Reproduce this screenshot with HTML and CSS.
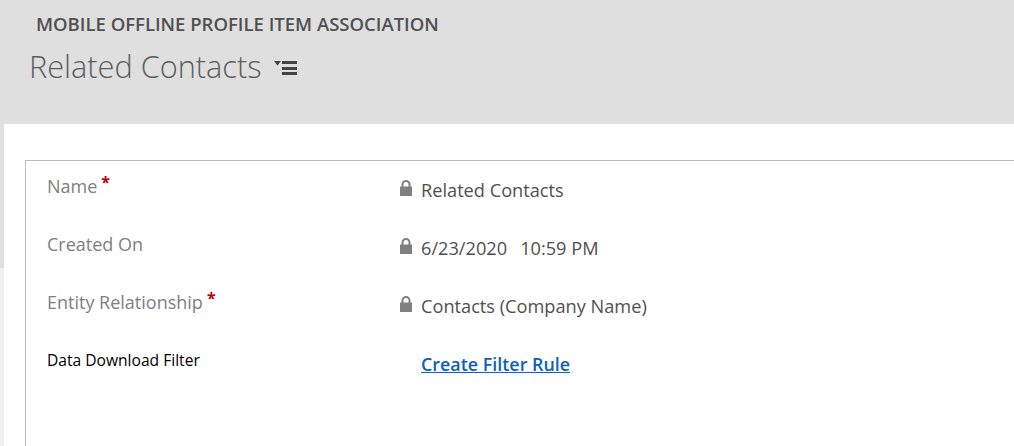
FILE: index.html

```html
<!DOCTYPE html>
<html lang="en">
<head>
    <meta charset="UTF-8">
    <meta name="viewport" content="width=device-width, initial-scale=1.0">
    <title>Related Contacts</title>
    <link rel="stylesheet" href="styles.css">
</head>
<body>
    <header class="page-header">
        <div class="entity-name">MOBILE OFFLINE PROFILE ITEM ASSOCIATION</div>
        <div class="record-title">
            <h1>Related Contacts</h1>
            <svg class="menu-icon" width="23" height="14" viewBox="0 0 23 14">
                <path d="M0 0h7L3.500 4.500z" fill="#444"/>
                <rect x="8" y="0" width="15" height="3" fill="#444"/>
                <rect x="8" y="6" width="15" height="3" fill="#444"/>
                <rect x="8" y="11" width="15" height="3" fill="#444"/>
            </svg>
        </div>
    </header>

    <div class="content">
        <div class="strip"></div>
        <main class="panel">
            <section class="card">
                <div class="row">
                    <div class="label">Name<span class="req">*</span></div>
                    <div class="value">
                        <svg class="lock" width="12" height="16" viewBox="0 0 12 16"><path d="M1.500 7V4.500a4.500 4.500 0 0 1 9 0V7H8.500V4.500a2.500 2.500 0 0 0-5 0V7zM0 6.500h12V16H0z" fill="#808084"/></svg>
                        <span>Related Contacts</span>
                    </div>
                </div>
                <div class="row">
                    <div class="label">Created On</div>
                    <div class="value">
                        <svg class="lock" width="12" height="16" viewBox="0 0 12 16"><path d="M1.500 7V4.500a4.500 4.500 0 0 1 9 0V7H8.500V4.500a2.500 2.500 0 0 0-5 0V7zM0 6.500h12V16H0z" fill="#808084"/></svg>
                        <span>6/23/2020</span><span class="time">10:59 PM</span>
                    </div>
                </div>
                <div class="row">
                    <div class="label">Entity Relationship<span class="req">*</span></div>
                    <div class="value">
                        <svg class="lock" width="12" height="16" viewBox="0 0 12 16"><path d="M1.500 7V4.500a4.500 4.500 0 0 1 9 0V7H8.500V4.500a2.500 2.500 0 0 0-5 0V7zM0 6.500h12V16H0z" fill="#808084"/></svg>
                        <span>Contacts (Company Name)</span>
                    </div>
                </div>
                <div class="row">
                    <div class="label label-dark">Data Download Filter</div>
                    <div class="value value-link">
                        <a href="#">Create Filter Rule</a>
                    </div>
                </div>
            </section>
        </main>
    </div>
</body>
</html>
```

FILE: styles.css

```css
html, body {
    height: 100%;
}
body {
    font-family: "Open Sans", "Noto Sans", sans-serif;
    margin: 0;
    overflow: hidden;
    background-color: #fff;
    display: flex;
    flex-direction: column;
}
.page-header {
    height: 124px;
    box-sizing: border-box;
    flex-shrink: 0;
    background-color: #dfdfdf;
    padding-top: 12px;
}
.entity-name {
    margin-left: 36px;
    font-size: 18.500px;
    font-weight: 600;
    line-height: 24px;
    color: #505050;
}
.record-title {
    display: flex;
    align-items: center;
    margin-left: 29px;
    margin-top: 5px;
}
.record-title h1 {
    margin: 0;
    font-size: 30.700px;
    font-weight: 300;
    line-height: 50px;
    color: #5c5c5c;
}
.menu-icon {
    margin-left: 13px;
    margin-top: 3px;
}
.content {
    flex: 1;
    display: flex;
}
.strip {
    width: 4px;
    background: linear-gradient(#dfdfdf 144px, #f0f0f0 144px);
}
.panel {
    flex: 1;
    padding: 36px 0 0 21px;
}
.card {
    height: 100%;
    box-sizing: border-box;
    border-top: 1px solid #b6bfbc;
    border-left: 1px solid #bdbdbd;
    padding-top: 1px;
}
.row {
    display: flex;
    height: 58px;
}
.label {
    width: 374px;
    padding-left: 21px;
    box-sizing: border-box;
    font-size: 18px;
    line-height: 48px;
    color: #7f7f7f;
}
.label-dark {
    font-size: 15.600px;
    color: #000;
}
.req {
    position: relative;
    top: -5px;
    margin-left: 4px;
    font-size: 16px;
    font-weight: 700;
    line-height: 1;
    color: #c00000;
}
.value {
    display: flex;
    align-items: center;
    height: 56px;
    font-size: 18.200px;
    color: #505050;
}
.lock {
    margin-right: 9px;
    margin-top: -5px;
}
.time {
    margin-left: 13px;
}
.value-link {
    padding-left: 21px;
}
.value-link a {
    font-weight: 600;
    font-size: 17.900px;
    color: #1160b7;
    text-decoration: underline;
}
```
